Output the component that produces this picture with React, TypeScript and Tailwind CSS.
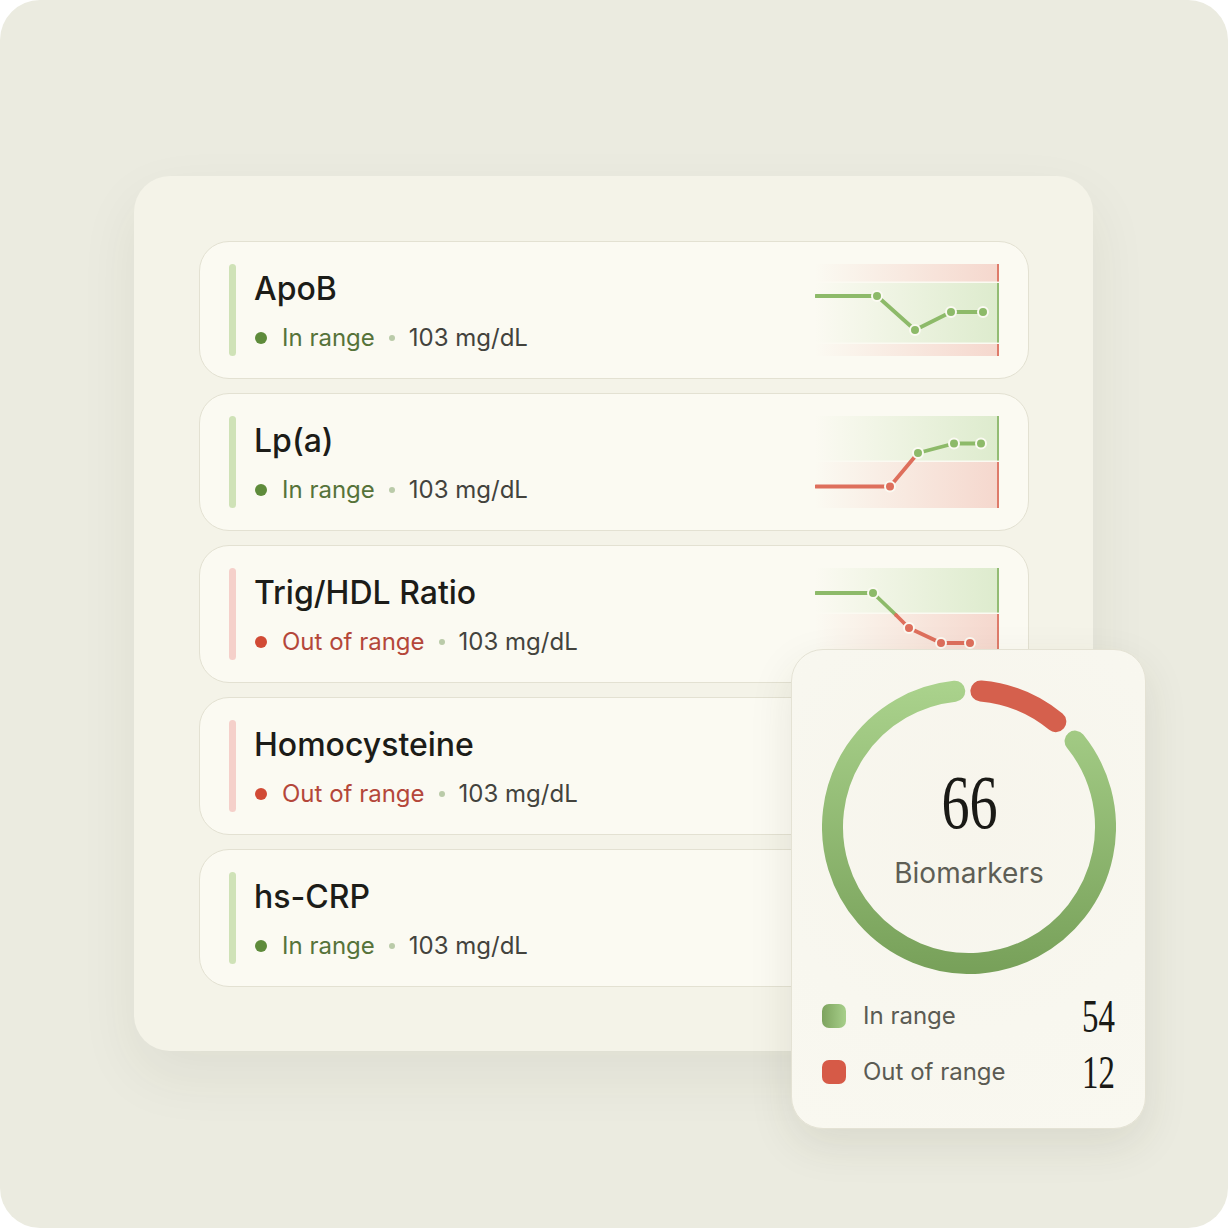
import React from "react";

type Pt = [number, number];
type Seg = { from: Pt; to: Pt; color: string };

const GREEN_LINE = "#8DBA69";
const RED_LINE = "#DE6F5C";

function Sparkline({
  id,
  bands,
  segs,
  points,
}: {
  id: string;
  bands: { y: number; h: number; kind: "g" | "r" }[];
  segs: Seg[];
  points: { p: Pt; color: string }[];
}) {
  return (
    <svg width="184" height="92" viewBox="0 0 184 92" className="ml-auto shrink-0">
      <defs>
        <linearGradient id={`${id}-g`} x1="0" y1="0" x2="1" y2="0">
          <stop offset="0" stopColor="#DDEBCD" stopOpacity="0" />
          <stop offset="1" stopColor="#DDEBCD" stopOpacity="1" />
        </linearGradient>
        <linearGradient id={`${id}-r`} x1="0" y1="0" x2="1" y2="0">
          <stop offset="0" stopColor="#F5D7CD" stopOpacity="0" />
          <stop offset="1" stopColor="#F5D7CD" stopOpacity="1" />
        </linearGradient>
      </defs>
      {bands.map((b, i) => (
        <g key={i}>
          <rect x="0" y={b.y} width="184" height={b.h} fill={`url(#${id}-${b.kind})`} />
          <rect x="182" y={b.y} width="2" height={b.h} fill={b.kind === "g" ? "#93BC74" : "#DE7B6A"} />
        </g>
      ))}
      {segs.map((s, i) => (
        <line
          key={i}
          x1={s.from[0]}
          y1={s.from[1]}
          x2={s.to[0]}
          y2={s.to[1]}
          stroke={s.color}
          strokeWidth="3.8"
          strokeLinecap="round"
        />
      ))}
      {points.map((pt, i) => (
        <circle key={i} cx={pt.p[0]} cy={pt.p[1]} r="5" fill={pt.color} stroke="#FBFAF2" strokeWidth="2" />
      ))}
    </svg>
  );
}

function Row({
  title,
  ok,
  spark,
}: {
  title: string;
  ok: boolean;
  spark?: React.ReactNode;
}) {
  return (
    <div className="flex h-[138px] items-center rounded-[30px] border-[1.5px] border-[#E3E1D2] bg-[#FBFAF2] pl-[29px] pr-[29px]">
      <div className={`h-[92px] w-[7px] shrink-0 rounded-full ${ok ? "bg-[#CFE2B7]" : "bg-[#F5D0CA]"}`} />
      <div className="ml-[18px] flex flex-col gap-[13px] pt-[3px]">
        <div className="text-[32px] leading-[40px] font-medium text-[#1C1C18]">{title}</div>
        <div className="flex items-center text-[24px] leading-[32px]">
          <span className={`ml-px h-[12px] w-[12px] rounded-full ${ok ? "bg-[#5E8B3B]" : "bg-[#D14A35]"}`} />
          <span className={`ml-[15px] ${ok ? "text-[#56733A]" : "text-[#B4473A]"}`}>
            {ok ? "In range" : "Out of range"}
          </span>
          <span className="mx-[14px] h-[6px] w-[6px] rounded-full bg-[#BACBA9]" />
          <span className="text-[#43433D]">103 mg/dL</span>
        </div>
      </div>
      {spark}
    </div>
  );
}

function polar(cx: number, cy: number, r: number, a: number): Pt {
  const rad = (a * Math.PI) / 180;
  return [cx + r * Math.sin(rad), cy - r * Math.cos(rad)];
}

function arc(cx: number, cy: number, r: number, a0: number, a1: number) {
  const [x0, y0] = polar(cx, cy, r, a0);
  const [x1, y1] = polar(cx, cy, r, a1);
  const large = a1 - a0 > 180 ? 1 : 0;
  return `M ${x0} ${y0} A ${r} ${r} 0 ${large} 1 ${x1} ${y1}`;
}

function Ring() {
  const c = 147;
  const r = 136.5;
  return (
    <svg width="294" height="294" viewBox="0 0 294 294" className="block">
      <defs>
        <linearGradient id="ringG" x1="0" y1="0" x2="0" y2="294" gradientUnits="userSpaceOnUse">
          <stop offset="0" stopColor="#ABD38D" />
          <stop offset="1" stopColor="#77A059" />
        </linearGradient>
      </defs>
      <path d={arc(c, c, r, 51, 354)} fill="none" stroke="url(#ringG)" strokeWidth="21" strokeLinecap="round" />
      <path d={arc(c, c, r, 5, 39.5)} fill="none" stroke="#D5604D" strokeWidth="21" strokeLinecap="round" />
    </svg>
  );
}

export default function App() {
  return (
    <div className="h-[1228px] w-[1228px] bg-white" style={{ fontFamily: "Inter, 'Noto Sans', sans-serif" }}>
      <div className="h-full w-full rounded-[40px] bg-[#EBEBE0] pl-[134px] pt-[176px]">
        <div className="relative w-[959px] rounded-[36px] bg-[#F4F3E8] pb-[64px] pl-[65px] pr-[64px] pt-[65px] shadow-[0_24px_60px_rgba(60,60,30,0.07)]">
          <div className="flex flex-col gap-[14px]">
            <Row
              title="ApoB"
              ok
              spark={
                <Sparkline
                  id="s1"
                  bands={[
                    { y: 0, h: 17.5, kind: "r" },
                    { y: 19, h: 59.5, kind: "g" },
                    { y: 80, h: 12, kind: "r" },
                  ]}
                  segs={[
                    { from: [1, 32], to: [62, 32], color: GREEN_LINE },
                    { from: [62, 32], to: [100, 66], color: GREEN_LINE },
                    { from: [100, 66], to: [136, 48], color: GREEN_LINE },
                    { from: [136, 48], to: [168, 48], color: GREEN_LINE },
                  ]}
                  points={[
                    { p: [62, 32], color: GREEN_LINE },
                    { p: [100, 66], color: GREEN_LINE },
                    { p: [136, 48], color: GREEN_LINE },
                    { p: [168, 48], color: GREEN_LINE },
                  ]}
                />
              }
            />
            <Row
              title="Lp(a)"
              ok
              spark={
                <Sparkline
                  id="s2"
                  bands={[
                    { y: 0, h: 44.5, kind: "g" },
                    { y: 46, h: 46, kind: "r" },
                  ]}
                  segs={[
                    { from: [1, 70.5], to: [75, 70.5], color: RED_LINE },
                    { from: [75, 70.5], to: [103, 37], color: RED_LINE },
                    { from: [103, 37], to: [139, 27.5], color: GREEN_LINE },
                    { from: [139, 27.5], to: [166, 27.5], color: GREEN_LINE },
                  ]}
                  points={[
                    { p: [75, 70.5], color: RED_LINE },
                    { p: [103, 37], color: GREEN_LINE },
                    { p: [139, 27.5], color: GREEN_LINE },
                    { p: [166, 27.5], color: GREEN_LINE },
                  ]}
                />
              }
            />
            <Row
              title="Trig/HDL Ratio"
              ok={false}
              spark={
                <Sparkline
                  id="s3"
                  bands={[
                    { y: 0, h: 44.5, kind: "g" },
                    { y: 46, h: 46, kind: "r" },
                  ]}
                  segs={[
                    { from: [1, 25], to: [58, 25], color: GREEN_LINE },
                    { from: [58, 25], to: [81, 47], color: GREEN_LINE },
                    { from: [81, 47], to: [94, 60], color: RED_LINE },
                    { from: [94, 60], to: [126, 75], color: RED_LINE },
                    { from: [126, 75], to: [155, 75], color: RED_LINE },
                  ]}
                  points={[
                    { p: [58, 25], color: GREEN_LINE },
                    { p: [94, 60], color: RED_LINE },
                    { p: [126, 75], color: RED_LINE },
                    { p: [155, 75], color: RED_LINE },
                  ]}
                />
              }
            />
            <Row title="Homocysteine" ok={false} />
            <Row title="hs-CRP" ok />
          </div>

          <div className="absolute left-[657px] top-[473px] w-[355px] rounded-[32px] border-[1.5px] border-[#E4E2D4] bg-[radial-gradient(circle_at_50%_35%,#F7F5EC_0%,#F8F7EF_60%,#F9F8F0_100%)] px-[30px] pb-[40px] pt-[30px] shadow-[0_16px_44px_rgba(60,60,30,0.10)]">
            <div className="relative mx-auto h-[294px] w-[294px]">
              <Ring />
              <div className="absolute inset-0 flex flex-col items-center">
                <div
                  className="mt-[82px] scale-x-[0.73] text-[77px] leading-[80px] text-[#1A1A16]"
                  style={{ fontFamily: "'Liberation Serif', 'DejaVu Serif', serif" }}
                >
                  66
                </div>
                <div className="mt-[15px] text-[28px] leading-[32px] text-[#5E5E55]">Biomarkers</div>
              </div>
            </div>
            <div className="mt-[26px] flex flex-col gap-[24px]">
              <div className="flex h-[32px] items-center">
                <span className="h-[24px] w-[24px] rounded-[7px] bg-[linear-gradient(90deg,#7DA35E,#A7CF8A)]" />
                <span className="ml-[17px] text-[24px] leading-[32px] text-[#5B5B53]">In range</span>
                <span
                  className="ml-auto origin-right scale-x-[0.7] text-[47px] leading-[32px] text-[#1A1A16]"
                  style={{ fontFamily: "'Liberation Serif', 'DejaVu Serif', serif" }}
                >
                  54
                </span>
              </div>
              <div className="flex h-[32px] items-center">
                <span className="h-[24px] w-[24px] rounded-[7px] bg-[#D65A47]" />
                <span className="ml-[17px] text-[24px] leading-[32px] text-[#5B5B53]">Out of range</span>
                <span
                  className="ml-auto origin-right scale-x-[0.7] text-[47px] leading-[32px] text-[#1A1A16]"
                  style={{ fontFamily: "'Liberation Serif', 'DejaVu Serif', serif" }}
                >
                  12
                </span>
              </div>
            </div>
          </div>
        </div>
      </div>
    </div>
  );
}
